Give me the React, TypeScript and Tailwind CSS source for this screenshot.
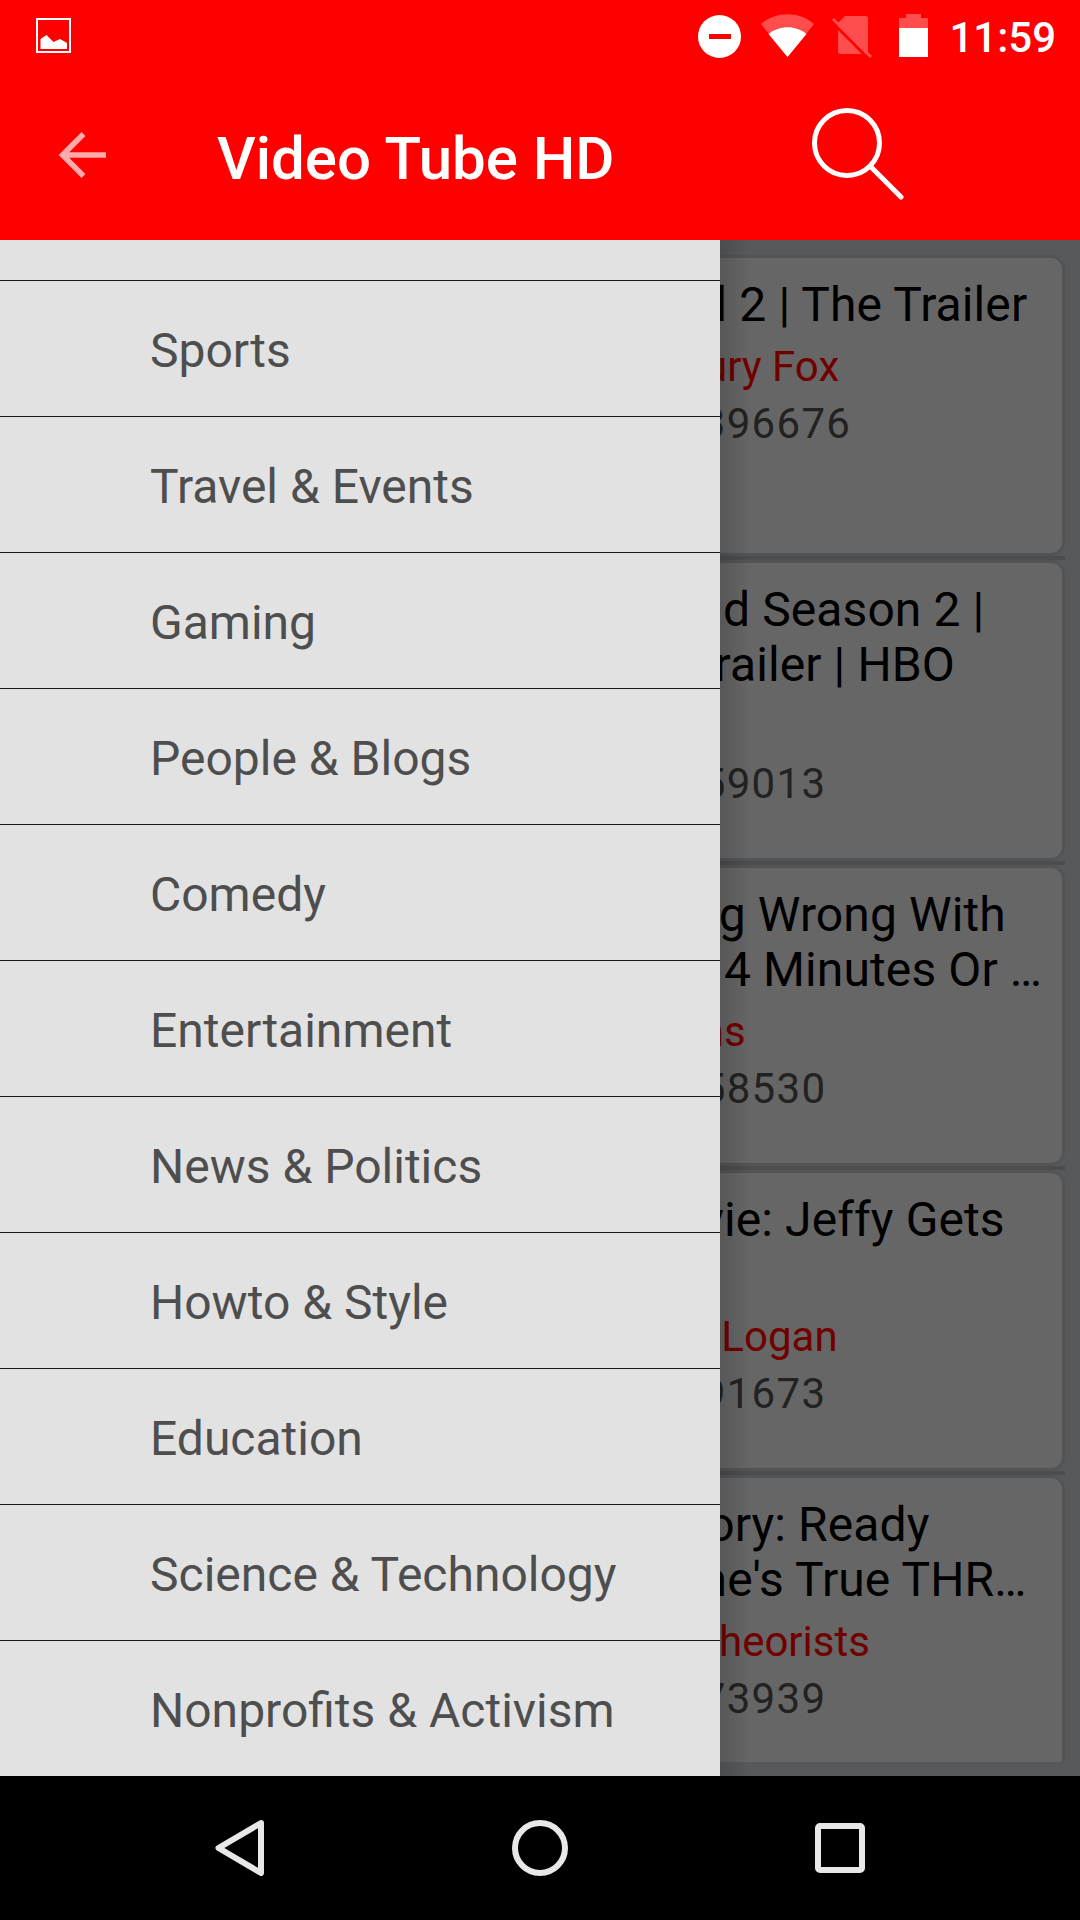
const categories = ['Sports', 'Travel & Events', 'Gaming', 'People & Blogs', 'Comedy', 'Entertainment', 'News & Politics', 'Howto & Style', 'Education', 'Science & Technology', 'Nonprofits & Activism'];

// text starts under the drawer, only the tail of each line shows
const videos = [
  { title: ['Deadpool 2 | The Trailer'], channel: '20th Century Fox', views: 'Views : 8396676' },
  { title: ['Westworld Season 2 |', 'Official Trailer | HBO'], channel: 'HBO', views: 'Views : 659013' },
  { title: ['Everything Wrong With', 'Bambi In 4 Minutes Or …'], channel: 'CinemaSins', views: 'Views : 158530' },
  { title: ['SML Movie: Jeffy Gets', 'Arrested!'], channel: 'SML Guys Logan', views: 'Views : 491673' },
  { title: ['Film Theory: Ready', 'Player One\'s True THR…'], channel: 'The Film Theorists', views: 'Views : 173939' },
];

function VideoCard({ v }: { v: (typeof videos)[number] }) {
  return (
    <div className="shrink-0 h-[305px] w-[1065px] border-b-[4px] border-[#4c4d4f]">
      <div className="h-[301px] border-[3px] border-[#535456] rounded-[14px] bg-[#666666] pt-[19px] pl-[520px] whitespace-nowrap">
        <div className="text-[48px] leading-[55px] tracking-[0.1px] text-black">
          {v.title.map((t) => (
            <div key={t}>{t}</div>
          ))}
        </div>
        <div className="mt-[10px] text-[42px] leading-[49px] text-[#700000]">{v.channel}</div>
        <div className="mt-[8px] text-[42px] leading-[49px] tracking-[1.3px] text-[#222222]">{v.views}</div>
      </div>
    </div>
  );
}

export default function App() {
  return (
    <div className="relative w-[1080px] h-[1920px] flex flex-col overflow-hidden bg-black font-['Roboto',sans-serif]">
      <header className="h-[240px] shrink-0 bg-[#ff0000] text-white">
        <div className="h-[72px] flex items-start pt-[14px] pl-[36px] pr-[24px]">
          <svg className="mt-[4px]" width="35" height="35" viewBox="0 0 35 35">
            <rect x="1" y="1" width="33" height="33" fill="none" stroke="white" strokeWidth="2" />
            <path d="M4.500 31V21L10.500 17L17.500 24L24 21L31 25V31z" fill="white" />
          </svg>
          <svg className="ml-auto mt-[1px]" width="43" height="43" viewBox="0 0 43 43">
            <circle cx="21.500" cy="21.500" r="21.500" fill="white" />
            <rect x="11" y="19" width="22" height="5" fill="#ff0000" />
          </svg>
          <svg className="ml-[20px]" width="53" height="43" viewBox="0 0 53 43">
            <path d="M0 10C15-3 38-3 53 10L26.500 43z" fill="white" fillOpacity="0.3" />
            <path d="M7.500 20C18 11 35 11 45.500 20L26.500 43z" fill="white" />
          </svg>
          <svg className="ml-[18px] mt-[2px]" width="41" height="42" viewBox="0 0 41 42">
            <path d="M13 0H33C35 0 36 1 36 3V36C36 37 35 38 33 38H9C7 38 6 37 6 36V7z" fill="white" fillOpacity="0.3" />
            <path d="M0 6L37 43" stroke="#ff0000" strokeWidth="3" />
            <path d="M1 3L39 41" stroke="#ff4d4d" strokeWidth="3" />
          </svg>
          <svg className="ml-[26px]" width="29" height="43" viewBox="0 0 29 43">
            <path d="M0 4H7V0H22V4H29V14H0z" fill="white" fillOpacity="0.3" />
            <rect y="14" width="29" height="29" fill="white" />
          </svg>
          <span className="ml-[21px] text-[42px] leading-[48px] font-medium">11:59</span>
        </div>
        <div className="h-[168px] flex items-start pl-[58px] pr-[176px]">
          <svg className="mt-[59px]" width="48" height="48" viewBox="0 0 48 48">
            <path d="M48 24H5M25.500 3L4.500 24L25.500 45" fill="none" stroke="white" strokeOpacity="0.67" strokeWidth="5.500" />
          </svg>
          <span className="ml-[111px] mt-[54px] text-[60px] leading-[66px] font-medium">Video Tube HD</span>
          <svg className="ml-auto mt-[34px]" width="94" height="94" viewBox="0 0 94 94">
            <circle cx="37" cy="37" r="32.500" fill="none" stroke="white" strokeWidth="5" />
            <path d="M62 62L91 91" stroke="white" strokeWidth="5" strokeLinecap="round" />
          </svg>
        </div>
      </header>

      <main className="h-[1536px] shrink-0 bg-[#58595b] pb-[14px]">
        <div className="h-full overflow-hidden pt-[15px] flex flex-col">
          {videos.map((v) => (
            <VideoCard key={v.views} v={v} />
          ))}
        </div>
      </main>

      <nav className="flex-1 bg-black flex items-start pt-[44px] pl-[215px]">
        <svg width="49" height="56" viewBox="0 0 49 56">
          <path d="M46 3L3.500 28L46 53z" fill="none" stroke="#e8e8e8" strokeWidth="6" strokeLinejoin="round" />
        </svg>
        <svg className="ml-[248px]" width="56" height="56" viewBox="0 0 56 56">
          <circle cx="28" cy="28" r="25" fill="none" stroke="#e8e8e8" strokeWidth="6" />
        </svg>
        <svg className="ml-[247px] mt-[3px]" width="50" height="50" viewBox="0 0 50 50">
          <rect x="3" y="3" width="44" height="44" rx="2" fill="none" stroke="#e8e8e8" strokeWidth="6" />
        </svg>
      </nav>

      <div className="absolute left-[720px] top-[240px] w-[30px] h-[1536px] bg-gradient-to-r from-black/15 to-transparent" />

      <aside className="absolute left-0 top-[240px] w-[720px] h-[1536px] bg-[#e2e2e2] overflow-hidden">
        <div className="h-[41px] border-b border-[#1a1a1a]" />
        {categories.map((c) => (
          <div key={c} className="h-[136px] pl-[150px] pt-[5px] flex items-center border-b border-[#1a1a1a] text-[48px] text-[#4e4e4e]">
            {c}
          </div>
        ))}
      </aside>
    </div>
  );
}
